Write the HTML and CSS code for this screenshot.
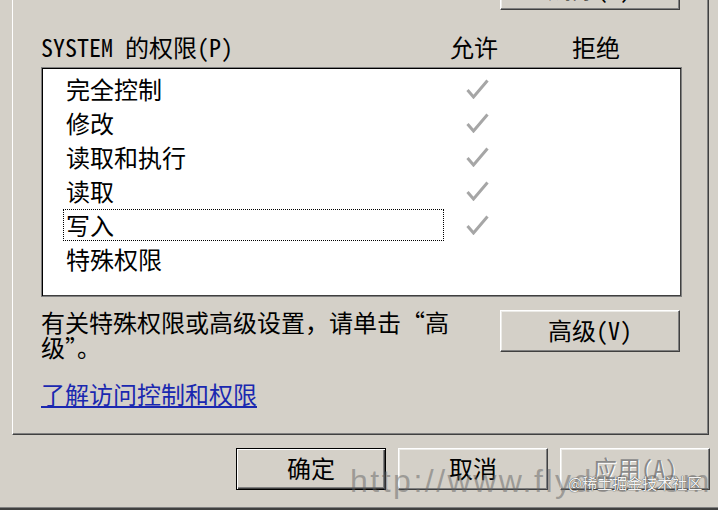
FILE: index.html
```html
<!DOCTYPE html>
<html lang="zh-CN">
<head>
<meta charset="utf-8">
<title>权限</title>
<link rel="stylesheet" href="styles.css">
</head>
<body>
<div class="dialog">
  <div class="panel">
    <div class="top-row"><button class="btn wide">删除(R)</button></div>
    <div class="perm-head"><span>SYSTEM 的权限(P)</span><span>允许</span><span>拒绝</span></div>
    <div class="list">
      <div class="row"><span class="name">完全控制</span><span class="cell"><svg class="check" viewBox="0 0 23 20" width="23" height="20"><path d="M1.5 11 L7.5 18 L21.5 1.5"/></svg></span></div>
      <div class="row"><span class="name">修改</span><span class="cell"><svg class="check" viewBox="0 0 23 20" width="23" height="20"><path d="M1.5 11 L7.5 18 L21.5 1.5"/></svg></span></div>
      <div class="row"><span class="name">读取和执行</span><span class="cell"><svg class="check" viewBox="0 0 23 20" width="23" height="20"><path d="M1.5 11 L7.5 18 L21.5 1.5"/></svg></span></div>
      <div class="row"><span class="name">读取</span><span class="cell"><svg class="check" viewBox="0 0 23 20" width="23" height="20"><path d="M1.5 11 L7.5 18 L21.5 1.5"/></svg></span></div>
      <div class="row"><span class="name focus">写入</span><span class="cell"><svg class="check" viewBox="0 0 23 20" width="23" height="20"><path d="M1.5 11 L7.5 18 L21.5 1.5"/></svg></span></div>
      <div class="row"><span class="name">特殊权限</span><span class="cell"></span></div>
    </div>
    <div class="adv-row">
      <p class="desc">有关特殊权限或高级设置，请单击“高级”。</p>
      <button class="btn wide">高级(V)</button>
    </div>
    <a class="link" href="#">了解访问控制和权限</a>
  </div>
  <div class="actions">
    <button class="btn default">确定</button>
    <button class="btn">取消</button>
    <button class="btn" disabled>应用(A)</button>
  </div>
</div>
<div class="watermark">http://www.flydoc.com</div>
<div class="juejin">@稀土掘金技术社区</div>
</body>
</html>
```
FILE: styles.css
```css
html, body {
  margin: 0;
  padding: 0;
}
body {
  width: 718px;
  height: 510px;
  overflow: hidden;
  position: relative;
  background: #d4d0c8;
  font-family: "Noto Sans Mono CJK SC", "Noto Sans CJK SC", sans-serif;
  font-size: 24px;
  color: #000;
}
.dialog {
  display: flex;
  flex-direction: column;
  height: 510px;
  box-sizing: border-box;
  border-bottom: 2px solid #404040;
  box-shadow: inset 0 -1px 0 #808080;
}
.panel {
  display: flex;
  flex-direction: column;
  margin-left: 12px;
  width: 697px;
  box-sizing: border-box;
  padding: 0 26px 28px 28px;
  border-left: 1px solid #ffffff;
  border-right: 1px solid #404040;
  border-bottom: 1px solid #404040;
  box-shadow: inset -1px -1px 0 #808080;
}
.top-row {
  display: flex;
  justify-content: flex-end;
  margin-top: -32px;
  padding-right: 2px;
}
.btn {
  font: inherit;
  font-size: 24px;
  color: #000;
  height: 42px;
  width: 150px;
  padding: 0 0 2px;
  line-height: 38px;
  background: #d4d0c8;
  border: 1px solid;
  border-color: #ffffff #404040 #404040 #ffffff;
  box-shadow: inset -1px -1px 0 #808080, inset 1px 1px 0 #ecebe7;
}
.btn.wide {
  width: 180px;
}
.btn.default {
  border: 1px solid #000;
  box-shadow: inset 1px 1px 0 #ffffff, inset -1px -1px 0 #404040, inset -2px -2px 0 #808080;
}
.btn:disabled {
  color: #8a8a8a;
  text-shadow: 1px 1px 0 #ffffff;
}
.perm-head {
  display: grid;
  grid-template-columns: 409px 122px 1fr;
  margin-top: 23px;
  height: 28px;
  line-height: 28px;
  margin-bottom: 1px;
}
.list {
  margin-top: 5px;
  height: 230px;
  box-sizing: border-box;
  background: #ffffff;
  border: 1px solid #808080;
  box-shadow: inset 1px 1px 0 #000, inset -1px -1px 0 #404040;
  padding-top: 4px;
}
.row {
  display: grid;
  grid-template-columns: 381px 1fr;
  align-items: center;
  height: 34px;
  padding-left: 21px;
}
.name {
  height: 32px;
  line-height: 29px;
  box-sizing: border-box;
  border: 1px dotted transparent;
  padding-left: 2px;
}
.name.focus {
  border-color: #000;
}
.cell {
  padding-left: 22px;
  display: flex;
  align-items: center;
}
.check {
  display: block;
}
.check path {
  fill: none;
  stroke: #a6a6a6;
  stroke-width: 3;
}
.adv-row {
  display: flex;
  justify-content: space-between;
  align-items: flex-start;
  margin-top: 13px;
  padding-right: 2px;
}
.desc {
  margin: -1px 0 0;
  width: 420px;
  line-height: 25px;
  min-height: 51px;
}
.link {
  align-self: flex-start;
  margin-top: 21px;
  line-height: 25px;
  color: #1a28b0;
  text-decoration: underline;
}
.actions {
  display: flex;
  justify-content: flex-end;
  gap: 12px;
  margin-top: 13px;
  padding-right: 8px;
}
.watermark {
  position: absolute;
  left: 350px;
  top: 465px;
  font-family: "Liberation Sans", sans-serif;
  font-size: 32px;
  line-height: 32px;
  letter-spacing: 2.5px;
  color: rgba(100, 100, 100, 0.5);
  white-space: nowrap;
}
.juejin {
  position: absolute;
  left: 568px;
  top: 474px;
  font-family: "Noto Sans CJK SC", sans-serif;
  font-size: 15px;
  line-height: 18px;
  color: #f4f4f4;
  text-shadow: 0 0 1px #444, 0 0 1px #444;
  white-space: nowrap;
}
```
